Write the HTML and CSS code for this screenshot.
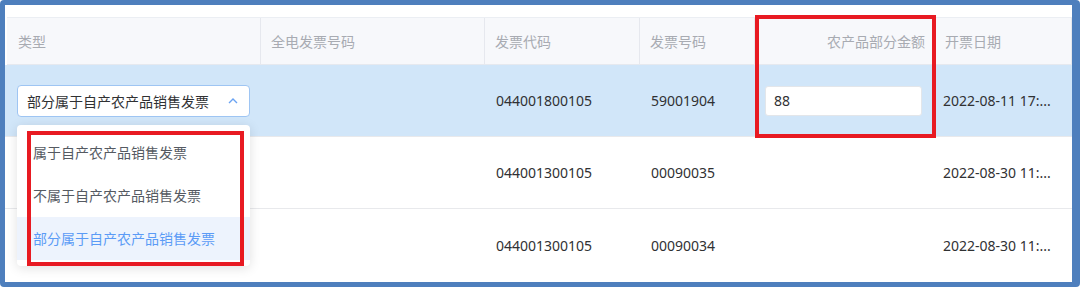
FILE: index.html
```html
<!DOCTYPE html>
<html lang="zh-CN">
<head>
    <meta charset="UTF-8">
    <title>发票列表</title>
    <link rel="stylesheet" href="styles.css">
</head>
<body>
    <div class="frame">
        <div class="grid">
            <!-- header -->
            <div class="head-row">
                <div class="cell">类型</div>
                <div class="cell">全电发票号码</div>
                <div class="cell">发票代码</div>
                <div class="cell">发票号码</div>
                <div class="cell right">农产品部分金额</div>
                <div class="cell">开票日期</div>
            </div>

            <div class="row selected">
                <div class="cell">
                    <div class="select">
                        <span>部分属于自产农产品销售发票</span>
                        <svg class="caret" width="10" height="6" viewBox="0 0 10 6"><path d="M1 5 L5 1 L9 5" fill="none" stroke="#6aa3f2" stroke-width="1.4"/></svg>
                    </div>
                    <ul class="dropdown">
                        <li>属于自产农产品销售发票</li>
                        <li>不属于自产农产品销售发票</li>
                        <li class="active">部分属于自产农产品销售发票</li>
                    </ul>
                </div>
                <div class="cell"></div>
                <div class="cell">044001800105</div>
                <div class="cell">59001904</div>
                <div class="cell"><div class="input">88</div></div>
                <div class="cell">2022-08-11 17:...</div>
            </div>

            <div class="row">
                <div class="cell"></div>
                <div class="cell"></div>
                <div class="cell">044001300105</div>
                <div class="cell">00090035</div>
                <div class="cell"></div>
                <div class="cell">2022-08-30 11:...</div>
            </div>

            <div class="row last">
                <div class="cell"></div>
                <div class="cell"></div>
                <div class="cell">044001300105</div>
                <div class="cell">00090034</div>
                <div class="cell"></div>
                <div class="cell">2022-08-30 11:...</div>
            </div>
        </div>

        <!-- red annotation boxes -->
        <div class="mark mark-menu"></div>
        <div class="mark mark-amount"></div>
    </div>
</body>
</html>
```

FILE: styles.css
```css
html, body {
    margin: 0;
    padding: 0;
    background: #ffffff;
    font-family: "Noto Sans", "Noto Sans CJK SC", sans-serif;
    font-size: 14px;
    color: #303133;
}

/* blue screenshot frame */
.frame {
    position: relative;
    width: 1080px;
    height: 287px;
    box-sizing: border-box;
    border-style: solid;
    border-color: #4e7fbd;
    border-width: 5px 8px 5px 5px;
    border-radius: 4px;
    padding-top: 12px;
    background: #ffffff;
    overflow: hidden;
}

.grid {
    display: flex;
    flex-direction: column;
}

.head-row, .row {
    display: grid;
    grid-template-columns: 256px 224px 155px 115px 180px 1fr;
}

.head-row {
    grid-template-columns: 254px 224px 155px 115px 180px 1fr;
    height: 48px;
    margin-left: 2px;
    background: #f7f8fb;
    border-top: 1px solid #ebeef3;
    border-bottom: 1px solid #e6e9ef;
    box-sizing: border-box;
    color: #a8abb2;
}

.head-row .cell {
    border-right: 1px solid #e6e8ee;
}

.head-row .cell:first-child {
    padding-left: 11px;
}

.cell {
    display: flex;
    align-items: center;
    padding: 0 10px;
    box-sizing: border-box;
    white-space: nowrap;
    overflow: visible;
}

.head-row .cell:first-child ~ .cell {
    padding-left: 10px;
}

.head-row .cell:last-child {
    padding-left: 8px;
}

.cell.right {
    justify-content: flex-end;
    padding-right: 9px;
}

.row {
    height: 72px;
    border-bottom: 1px solid #e8e9ec;
    box-sizing: border-box;
}

.row.last {
    height: 73px;
    border-bottom: none;
}

.row .cell:first-child {
    padding-left: 12px;
    position: relative;
}

.row.selected {
    background: #d1e6f9;
}

.row .cell:nth-child(3) {
    padding-left: 11px;
}

.row .cell:nth-child(4) {
    padding-left: 11px;
}

.row .cell:nth-child(6) {
    padding-left: 8px;
}

/* select */
.select {
    width: 233px;
    height: 32px;
    box-sizing: border-box;
    border: 1px solid #9ec5f3;
    border-radius: 4px;
    background: #ffffff;
    display: flex;
    align-items: center;
    justify-content: space-between;
    padding: 0 10px 0 9px;
    color: #303133;
}

.caret {
    margin-right: 1px;
}

.dropdown {
    position: absolute;
    left: 12px;
    top: 60px;
    width: 233px;
    margin: 0;
    padding: 6px 0 6px;
    list-style: none;
    background: #ffffff;
    border-radius: 4px;
    box-shadow: 0 2px 12px rgba(0, 0, 0, 0.12);
    z-index: 2;
    color: #555a62;
}

.dropdown li {
    height: 43px;
    line-height: 43px;
    padding-left: 16px;
}

.dropdown li.active {
    background: #edf3fd;
    color: #5b9bf6;
}

/* amount input */
.input {
    width: 157px;
    height: 30px;
    box-sizing: border-box;
    border: 1px solid #e3e6ea;
    border-radius: 3px;
    background: #ffffff;
    display: flex;
    align-items: center;
    padding-left: 8px;
    color: #303133;
}

/* red highlight rectangles */
.mark {
    position: absolute;
    border: 4px solid #e81a22;
    box-sizing: border-box;
    z-index: 3;
}

.mark-menu {
    left: 22px;
    top: 126px;
    width: 217px;
    height: 135px;
}

.mark-amount {
    left: 750px;
    top: 10px;
    width: 181px;
    height: 123px;
}
```
